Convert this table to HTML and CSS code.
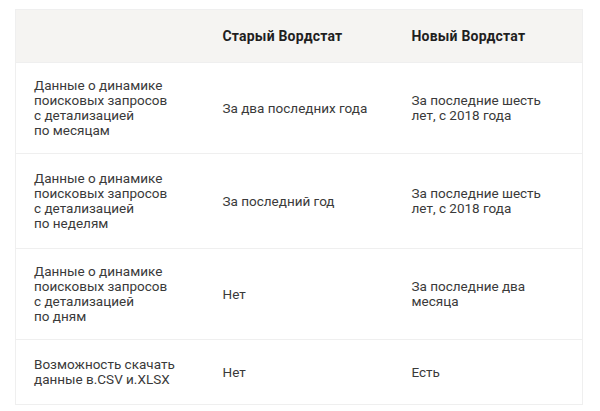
FILE: index.html
```html
<!DOCTYPE html>
<html lang="ru">
<head>
<meta charset="utf-8">
<link rel="stylesheet" href="styles.css">
</head>
<body>
<table class="cmp">
  <thead>
    <tr><th></th><th>Старый Вордстат</th><th>Новый Вордстат</th></tr>
  </thead>
  <tbody>
    <tr class="r1">
      <td>Данные о динамике<br>поисковых запросов<br>с детализацией<br>по месяцам</td>
      <td>За два последних года</td>
      <td>За последние шесть<br>лет, с 2018 года</td>
    </tr>
    <tr class="r2">
      <td>Данные о динамике<br>поисковых запросов<br>с детализацией<br>по неделям</td>
      <td>За последний год</td>
      <td>За последние шесть<br>лет, с 2018 года</td>
    </tr>
    <tr class="r3">
      <td>Данные о динамике<br>поисковых запросов<br>с детализацией<br>по дням</td>
      <td>Нет</td>
      <td>За последние два<br>месяца</td>
    </tr>
    <tr class="r4">
      <td>Возможность скачать<br>данные в.CSV и.XLSX</td>
      <td>Нет</td>
      <td>Есть</td>
    </tr>
  </tbody>
</table>
</body>
</html>
```
FILE: styles.css
```css
html, body { margin: 0; padding: 0; background: #fff; }
body { padding: 9px 0 0 15px; font-family: Roboto, "Noto Sans", sans-serif; color: #3a3a3a; }
.cmp {
  width: 568px;
  border-collapse: collapse;
  table-layout: fixed;
  border: 1px solid #efefef;
  font-size: 13.5px;
  line-height: 15px;
}
.cmp th, .cmp td {
  text-align: left;
  vertical-align: middle;
  padding: 0 8px 0 18px;
}
.cmp th {
  background: #f5f4f2;
  height: 52px;
  font-weight: 700;
  color: #1f1f1f;
  font-size: 14px;
  letter-spacing: 0.2px;
}
.cmp td { border-top: 1px solid #efefef; }
.r1 td { height: 90px; }
.r2 td { height: 94px; }
.r3 td { height: 90px; }
.r4 td { height: 64px; }
```
